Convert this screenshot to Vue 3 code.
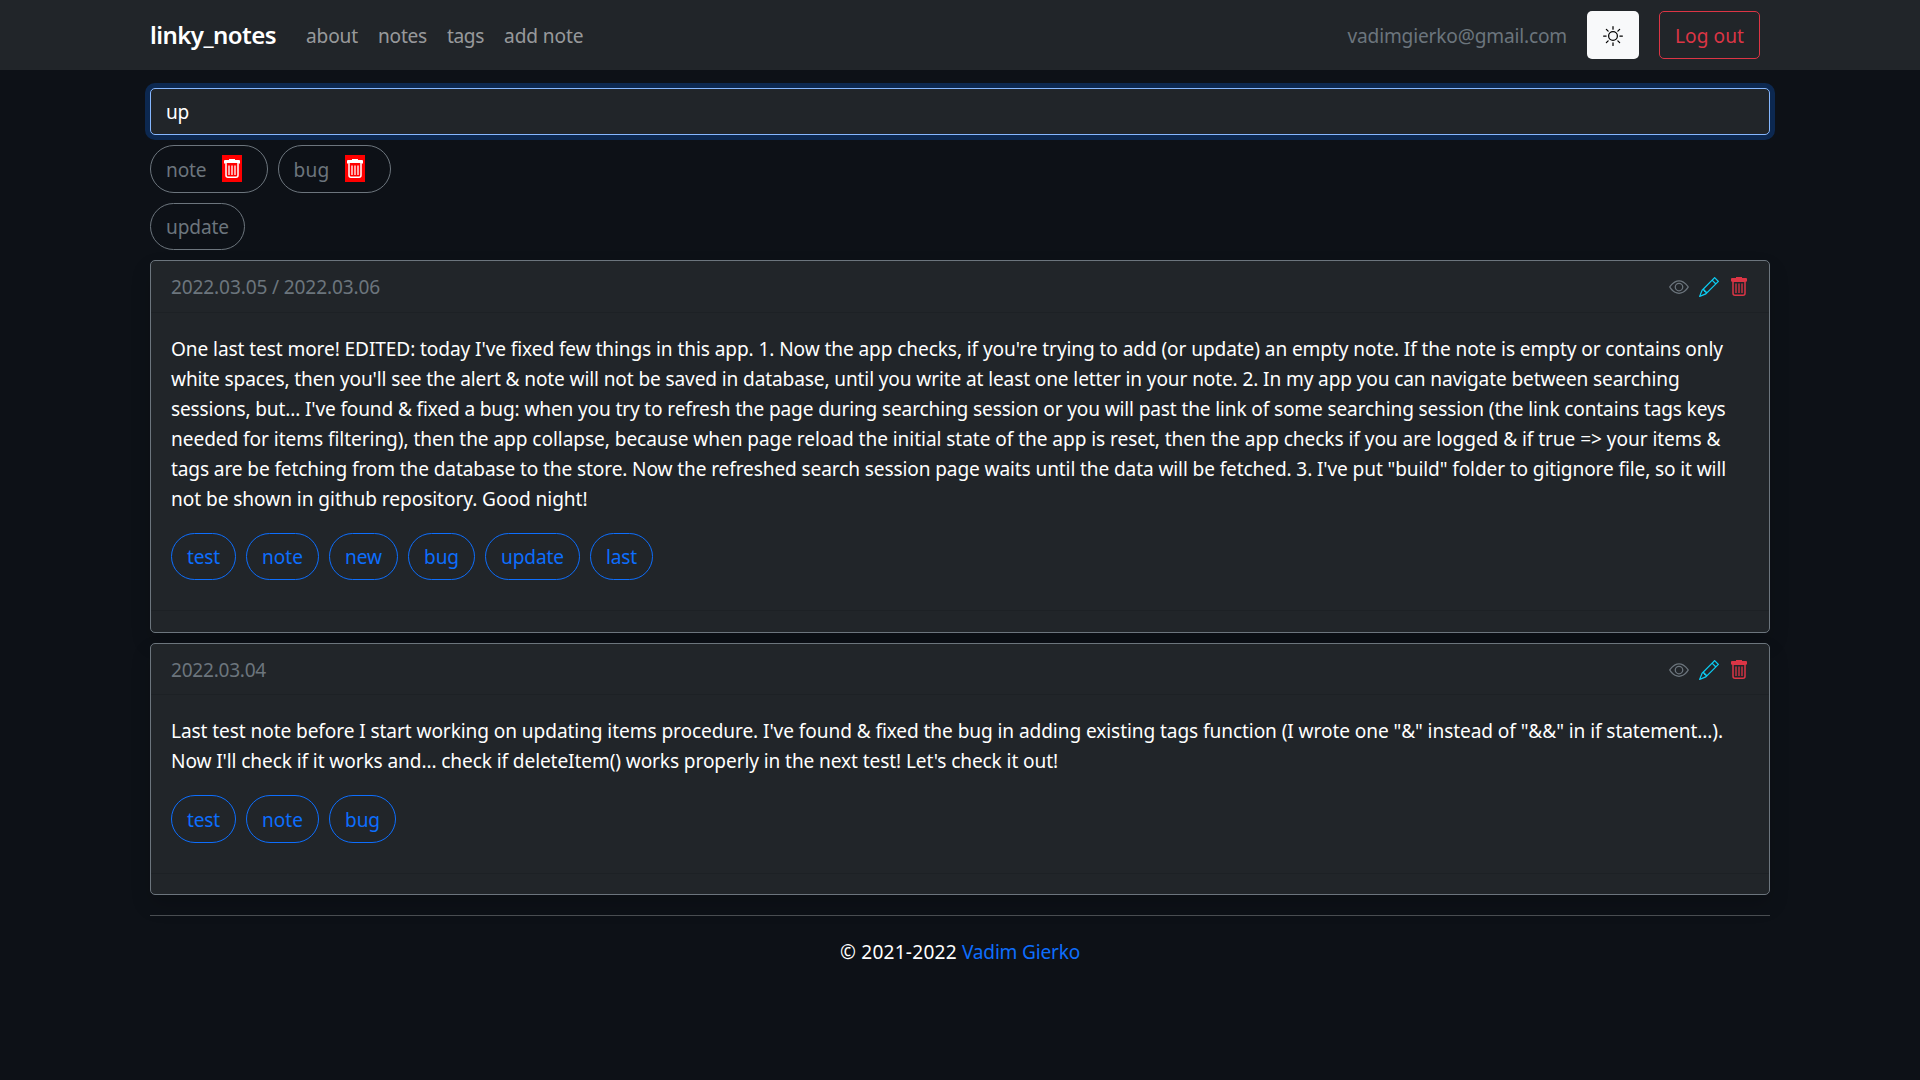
<script setup>
// Sets letter spacing so that a piece of text fills the given advance width.
const vFit = {
  mounted(el, { value }) {
    el.style.letterSpacing = '0px'
    const natural = el.getBoundingClientRect().width
    el.style.letterSpacing = (value - natural) / el.textContent.length + 'px'
  },
}

const links = [
  ['about', 52],
  ['notes', 49],
  ['tags', 37],
  ['add note', 79.5],
]

const selected = [
  ['note', 40.5],
  ['bug', 36],
]

const notes = [
  {
    date: ['2022.03.05 / 2022.03.06', 209],
    lines: [
      ["One last test more! EDITED: today I've fixed few things in this app. 1. Now the app checks, if you're trying to add (or update) an empty note. If the note is empty or contains only", 1552],
      ["white spaces, then you'll see the alert & note will not be saved in database, until you write at least one letter in your note. 2. In my app you can navigate between searching", 1508.5],
      ["sessions, but... I've found & fixed a bug: when you try to refresh the page during searching session or you will past the link of some searching session (the link contains tags keys", 1554.5],
      ['needed for items filtering), then the app collapse, because when page reload the initial state of the app is reset, then the app checks if you are logged & if true => your items &', 1549.5],
      ['tags are be fetching from the database to the store. Now the refreshed search session page waits until the data will be fetched. 3. I\'ve put "build" folder to gitignore file, so it will', 1555],
      ['not be shown in github repository. Good night!', 416.5],
    ],
    tags: [['test', 33], ['note', 41], ['new', 37], ['bug', 35], ['update', 63], ['last', 31]],
  },
  {
    date: ['2022.03.04', 95],
    lines: [
      ['Last test note before I start working on updating items procedure. I\'ve found & fixed the bug in adding existing tags function (I wrote one "&" instead of "&&" in if statement...).', 1552],
      ["Now I'll check if it works and... check if deleteItem() works properly in the next test! Let's check it out!", 887],
    ],
    tags: [['test', 33], ['note', 41], ['bug', 35]],
  },
]
</script>

<template>
  <div class="page">
    <nav class="navbar">
      <div class="container bar">
        <a class="brand"><span v-fit="126">linky_notes</span></a>
        <a v-for="[label, w] in links" :key="label" class="nav-link"><span v-fit="w">{{ label }}</span></a>
        <span class="email"><span v-fit="219.5">vadimgierko@gmail.com</span></span>
        <button class="theme" aria-label="Light theme">
          <svg width="20" height="20" viewBox="0 0 16 16" fill="currentColor">
            <path d="M8 11a3 3 0 1 1 0-6 3 3 0 0 1 0 6zm0 1a4 4 0 1 0 0-8 4 4 0 0 0 0 8zM8 0a.5.5 0 0 1 .5.5v2a.5.5 0 0 1-1 0v-2A.5.5 0 0 1 8 0zm0 13a.5.5 0 0 1 .5.5v2a.5.5 0 0 1-1 0v-2A.5.5 0 0 1 8 13zm8-5a.5.5 0 0 1-.5.5h-2a.5.5 0 0 1 0-1h2a.5.5 0 0 1 .5.5zM3 8a.5.5 0 0 1-.5.5h-2a.5.5 0 0 1 0-1h2A.5.5 0 0 1 3 8zm10.657-5.657a.5.5 0 0 1 0 .707l-1.414 1.415a.5.5 0 1 1-.707-.708l1.414-1.414a.5.5 0 0 1 .707 0zm-9.193 9.193a.5.5 0 0 1 0 .707L3.05 13.657a.5.5 0 0 1-.707-.707l1.414-1.414a.5.5 0 0 1 .707 0zm9.193 2.121a.5.5 0 0 1-.707 0l-1.414-1.414a.5.5 0 0 1 .707-.707l1.414 1.414a.5.5 0 0 1 0 .707zM4.464 4.465a.5.5 0 0 1-.707 0L2.343 3.05a.5.5 0 1 1 .707-.707l1.414 1.414a.5.5 0 0 1 0 .708z" />
          </svg>
        </button>
        <button class="logout"><span v-fit="69">Log out</span></button>
      </div>
    </nav>

    <main class="container">
      <div class="search"><span v-fit="23">up</span></div>

      <div class="row selected">
        <span v-for="[label, w] in selected" :key="label" class="pill">
          <span v-fit="w">{{ label }}</span>
          <svg class="remove" viewBox="0 0 20 27">
            <path d="M7 4h6v1h4a1 1 0 0 1 1 1v2.500h-1.500v-.5h-13v.5H2V6a1 1 0 0 1 1-1h4z" fill="#fff" />
            <path d="M4 8v12.200a2 2 0 0 0 2 2h8a2 2 0 0 0 2-2V8" fill="none" stroke="#fff" stroke-width="1.500" />
            <path d="M7 10.500v9.500M10 10.500v9.500M13 10.500v9.500" stroke="#fff" stroke-width="1.300" />
          </svg>
        </span>
      </div>
      <div class="row found">
        <span class="pill"><span v-fit="63">update</span></span>
      </div>

      <article v-for="note in notes" :key="note.date[0]" class="card">
        <header class="card-header">
          <span v-fit="note.date[1]" class="date">{{ note.date[0] }}</span>
          <span class="actions">
            <svg class="eye" width="20" height="20" viewBox="0 0 16 16" fill="currentColor">
              <path d="M16 8s-3-5.500-8-5.500S0 8 0 8s3 5.500 8 5.500S16 8 16 8zM1.173 8a13.133 13.133 0 0 1 1.660-2.043C4.120 4.668 5.880 3.500 8 3.500c2.120 0 3.879 1.168 5.168 2.457A13.133 13.133 0 0 1 14.828 8c-.058.087-.122.183-.195.288-.335.480-.830 1.120-1.465 1.755C11.879 11.332 10.119 12.500 8 12.500c-2.120 0-3.879-1.168-5.168-2.457A13.134 13.134 0 0 1 1.172 8z" />
              <path d="M8 5.500a2.500 2.500 0 1 0 0 5 2.500 2.500 0 0 0 0-5zM4.500 8a3.500 3.500 0 1 1 7 0 3.500 3.500 0 0 1-7 0z" />
            </svg>
            <svg class="pencil" width="20" height="20" viewBox="0 0 16 16" fill="currentColor">
              <path d="M12.146.146a.5.5 0 0 1 .708 0l3 3a.5.5 0 0 1 0 .708l-10 10a.5.5 0 0 1-.168.110l-5 2a.5.5 0 0 1-.650-.650l2-5a.5.5 0 0 1 .110-.168l10-10zM11.207 2.500 13.500 4.793 14.793 3.500 12.500 1.207 11.207 2.500zm1.586 3L10.500 3.207 4 9.707V10h.5a.5.5 0 0 1 .5.5v.5h.5a.5.5 0 0 1 .5.5v.5h.293l6.500-6.500zm-9.761 5.175-.106.106-1.528 3.821 3.821-1.528.106-.106A.5.5 0 0 1 5 12.500V12h-.5a.5.5 0 0 1-.5-.5V11h-.5a.5.5 0 0 1-.468-.325z" />
            </svg>
            <svg class="trash" width="20" height="20" viewBox="0 0 20 20">
              <path d="M7 0h6v1h4a1 1 0 0 1 1 1v2.500h-1.500v.5h-13v-.5H2V2a1 1 0 0 1 1-1h4z" fill="currentColor" />
              <path d="M4 4v12.200a2 2 0 0 0 2 2h8a2 2 0 0 0 2-2V4" fill="none" stroke="currentColor" stroke-width="1.500" />
              <path d="M7 6.500v9.500M10 6.500v9.500M13 6.500v9.500" stroke="currentColor" stroke-width="1.300" />
            </svg>
          </span>
        </header>
        <div class="card-body">
          <p class="text">
            <span v-for="[line, w] in note.lines" :key="line" class="line"><span v-fit="w">{{ line }}</span></span>
          </p>
          <div class="row">
            <span v-for="[label, w] in note.tags" :key="label" class="pill link"><span v-fit="w">{{ label }}</span></span>
          </div>
        </div>
        <footer class="card-footer"></footer>
      </article>

      <hr class="rule" />
      <p class="copyright">
        <span v-fit="122">© 2021-2022 </span><a v-fit="118">Vadim Gierko</a>
      </p>
    </main>
  </div>
</template>

<style>
body {
  margin: 0;
  background: #0d1117;
}
</style>

<style scoped>
.page {
  min-height: 1080px;
  background: #0d1117;
  color: #fff;
  font: 19.1px/30px "Noto Sans", "Open Sans", sans-serif;
}
.page * {
  box-sizing: border-box;
}
.page span,
.page a {
  white-space: pre;
}
.container {
  width: 1620px;
  margin: 0 auto;
}
.navbar {
  height: 70px;
  background: #212529;
}
.bar {
  display: flex;
  align-items: center;
  height: 100%;
  padding-right: 10px;
}
.brand {
  width: 136px;
  margin-right: 10px;
  font-size: 24px;
  font-weight: 600;
}
.nav-link {
  padding: 1px 10px 0;
  color: rgba(255, 255, 255, 0.55);
}
.email {
  margin-left: auto;
  padding-top: 1px;
  color: #6c757d;
}
.theme,
.logout {
  display: flex;
  align-items: center;
  justify-content: center;
  height: 48px;
  border-radius: 5px;
  font: inherit;
}
.theme {
  width: 52px;
  margin: 0 20px;
  padding: 2px 0 0;
  border: 0;
  background: #f8f9fa;
  color: #000;
}
.logout {
  width: 101px;
  padding: 1px 0 0;
  border: 1px solid #dc3545;
  background: transparent;
  color: #dc3545;
}
.search {
  height: 47px;
  margin-top: 18px;
  padding: 8px 15px;
  border: 1px solid #86b7fe;
  border-radius: 5px;
  background: #212529;
  box-shadow: 0 0 0 5px rgba(13, 110, 253, 0.25);
}
.row {
  display: flex;
  gap: 10px;
}
.selected {
  margin-top: 10px;
}
.found {
  margin: 10px 0;
}
.pill {
  display: flex;
  align-items: center;
  height: 47px;
  padding: 1px 15px 0;
  border: 1px solid #6c757d;
  border-radius: 24px;
  color: #6c757d;
}
.selected .pill {
  height: 48px;
}
.link {
  border-color: #0d6efd;
  color: #0d6efd;
}
.remove {
  width: 20px;
  height: 27px;
  margin: 0 10px 2px 15px;
  background: #f00;
}
.card {
  margin-bottom: 10px;
  border: 1px solid #6c757d;
  border-radius: 5px;
  background: #212529;
  box-shadow: 0 10px 20px rgba(0, 0, 0, 0.15);
}
.card-header {
  display: flex;
  align-items: center;
  justify-content: space-between;
  height: 52px;
  padding: 1px 20px 0;
  border-bottom: 1px solid #1d2125;
  color: #6c757d;
}
.actions {
  display: flex;
  gap: 10px;
}
.pencil {
  color: #0dcaf0;
}
.trash {
  color: #dc3545;
}
.card-body {
  padding: 21px 20px 30px;
}
.text {
  margin: 0 0 19px;
}
.line {
  display: block;
}
.card-footer {
  height: 22px;
  border-top: 1px solid #1d2125;
}
.card + .card .card-header {
  height: 51px;
}
.card + .card .pill {
  height: 48px;
}
.card + .card .card-footer {
  height: 21px;
}
.rule {
  height: 1px;
  margin: 20px 0 21px;
  border: 0;
  background: #494d51;
}
.copyright {
  margin: 0;
  text-align: center;
}
.copyright a {
  color: #0d6efd;
}
</style>
